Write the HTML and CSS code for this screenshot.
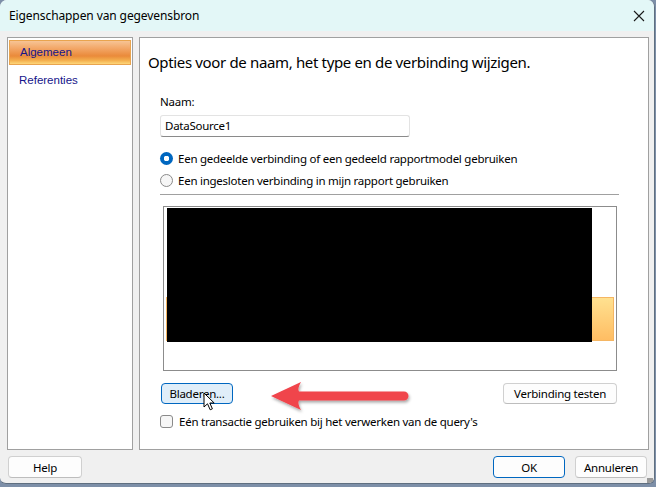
FILE: index.html
```html
<!DOCTYPE html>
<html lang="nl">
<head>
    <meta charset="utf-8">
    <title>Eigenschappen van gegevensbron</title>
    <link rel="stylesheet" href="styles.css">
</head>
<body>
    <div class="window">
        <div class="titlebar">
            <span class="title">Eigenschappen van gegevensbron</span>
            <svg class="close" width="12" height="12" viewBox="0 0 12 12">
                <path d="M1 1 L11 11 M11 1 L1 11" stroke="#1a1a1a" stroke-width="1.1" fill="none"/>
            </svg>
        </div>

        <div class="main">
            <nav class="sidebar">
                <div class="nav-item active">Algemeen</div>
                <div class="nav-item">Referenties</div>
            </nav>

            <section class="page">
                <h1>Opties voor de naam, het type en de verbinding wijzigen.</h1>
                <div class="form">
                    <div class="field-label">Naam:</div>
                    <div class="textbox">DataSource1</div>

                    <div class="radio-row first">
                        <span class="radio checked"></span>
                        Een gedeelde verbinding of een gedeeld rapportmodel gebruiken
                    </div>
                    <div class="radio-row">
                        <span class="radio"></span>
                        Een ingesloten verbinding in mijn rapport gebruiken
                    </div>

                    <div class="sep"></div>

                    <div class="listbox">
                        <div class="list-item selected"></div>
                        <div class="redact"></div>
                    </div>

                    <div class="button-row">
                        <button class="btn focused">Bladeren...</button>
                        <button class="btn">Verbinding testen</button>

                        <!-- annotation arrow + mouse pointer -->
                        <svg class="arrow" width="150" height="36" viewBox="0 0 150 36">
                            <defs>
                                <filter id="shade" x="-10%" y="-30%" width="120%" height="180%">
                                    <feDropShadow dx="1" dy="2" stdDeviation="1.5" flood-color="#000" flood-opacity="0.35"/>
                                </filter>
                            </defs>
                            <g filter="url(#shade)" fill="#f0444c">
                                <path d="M5 15 L35 1 Q31 8 33 10.5 L138 10.5 A4.5 4.5 0 0 1 138 19.5 L33 19.5 Q31 22 35 29 Z"/>
                            </g>
                        </svg>
                        <svg class="pointer" width="14" height="20" viewBox="0 0 14 20">
                            <path d="M1 1 L1 15 L4.5 11.8 L7.2 17.8 L9.4 16.8 L6.8 11 L11.2 11 Z" fill="#fff" stroke="#000" stroke-width="1" stroke-linejoin="round"/>
                        </svg>
                    </div>

                    <div class="check-row">
                        <span class="checkbox"></span>
                        Eén transactie gebruiken bij het verwerken van de query's
                    </div>
                </div>
            </section>
        </div>

        <div class="footer">
            <button class="btn wide">Help</button>
            <div class="footer-right">
                <button class="btn wide default">OK</button>
                <button class="btn wide">Annuleren</button>
            </div>
            <span class="grip"></span>
        </div>
    </div>
</body>
</html>
```

FILE: styles.css
```css
* { box-sizing: border-box; margin: 0; padding: 0; }
body { background: #7d8fa8; font-family: "Noto Sans", "Open Sans", sans-serif; font-size: 11.5px; letter-spacing: -0.25px; color: #000; width: 656px; height: 487px; overflow: hidden; }

.window { width: 655px; height: 484px; background: #f0f0f0; border-radius: 7px 7px 6px 6px; border-right: 1px solid #5f6f80; border-bottom: 1px solid #5f6f80; overflow: hidden; position: relative; }

.titlebar { height: 31px; background: #e3f7f7; display: flex; align-items: center; justify-content: space-between; padding: 0 9px 0 9px; }
.title { font-size: 12px; letter-spacing: -0.1px; }

.main { display: flex; gap: 6px; padding: 6px 5px 0 7px; height: 419px; }
.sidebar { width: 126px; background: #fff; border: 1px solid #a0a0a0; padding: 2px 1px; }
.nav-item { font-family: "Liberation Sans", Arial, sans-serif; font-size: 11.5px; letter-spacing: 0; color: #15158a; height: 25px; line-height: 25px; padding-left: 10px; margin-bottom: 3px; }
.nav-item.active { border: 1px solid #e9a44e; line-height: 23px; background: linear-gradient(#f7c495 0%, #f2a463 35%, #ea8a3a 65%, #f4b04f 85%, #fdd77a 100%); }

.page { flex: 1; background: #fff; border: 1px solid #a0a0a0; padding: 14px 10px 0 8px; }
h1 { font-size: 15px; font-weight: normal; line-height: 20px; letter-spacing: -0.35px; }

.form { margin-left: 12px; width: 459px; }
.field-label { margin-top: 22px; line-height: 16px; }
.textbox { margin-top: 5px; width: 250px; height: 22px; border: 1px solid #e3e3e3; border-bottom: 1px solid #8a8a8a; border-radius: 3px; padding-left: 4px; line-height: 20px; background: #fff; }

.radio-row { display: flex; align-items: center; gap: 5px; height: 20px; margin-top: 2px; }
.radio-row.first { margin-top: 11px; }
.radio { width: 13px; height: 13px; border-radius: 50%; border: 1px solid #8a8a8a; background: #f6f6f6; flex: none; }
.radio.checked { border: none; background: radial-gradient(circle, #fff 0 2.6px, #0067c0 3px); }

.sep { height: 1px; background: #a0a0a0; margin-top: 4px; }

.listbox { position: relative; margin: 11px 2px 0 3px; height: 165px; border: 1px solid #8c8c8c; background: #fff; padding: 90px 2px 0 2px; }
.list-item.selected { height: 44px; border: 1px solid #f5b663; background: linear-gradient(#ffe190, #ffbd63); }
.redact { position: absolute; left: 3px; top: 1px; width: 425px; height: 134px; background: #000; }

.button-row { position: relative; display: flex; justify-content: space-between; margin: 12px 2px 0 1px; }
.btn { font-family: inherit; font-size: 11.5px; letter-spacing: -0.25px; height: 21px; padding: 0 10px; border: 1px solid #d0d0d0; border-bottom-color: #bdbdbd; border-radius: 4px; background: #fdfdfd; color: #000; }
.btn.focused { width: 72px; border-color: #0067c0; background: #e0eef9; padding: 0; }
.arrow { position: absolute; left: 105px; top: -2px; }
.pointer { position: absolute; left: 42px; top: 9px; }

.check-row { display: flex; align-items: center; gap: 6px; height: 16px; margin-top: 9px; }
.checkbox { width: 13px; height: 13px; border: 1px solid #8a8a8a; border-radius: 3px; background: #f6f6f6; flex: none; }

.footer { display: flex; justify-content: space-between; padding: 6px 7px 0 8px; position: relative; }
.footer-right { display: flex; gap: 10px; }
.btn.wide { width: 74px; height: 22px; padding: 0; }
.footer-right .btn.wide { width: 72px; }
.btn.default { border-color: #0067c0; }
.grip { position: absolute; right: 1px; bottom: -6px; width: 6px; height: 6px; background: radial-gradient(circle, #9a9a9a 0.8px, transparent 1px) 0 0 / 2px 2px; }
```
